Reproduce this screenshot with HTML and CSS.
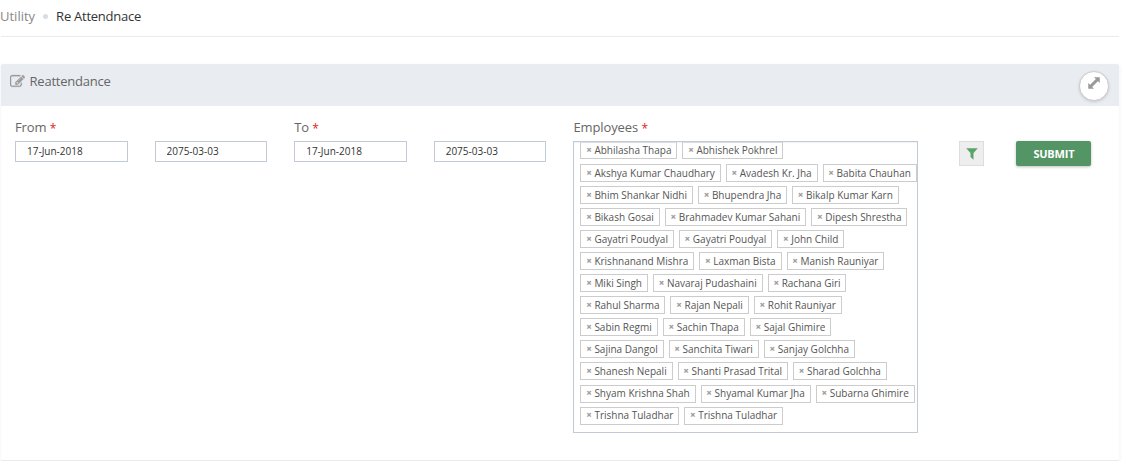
FILE: index.html
```html
<!DOCTYPE html>
<html lang="en">
<head>
<meta charset="utf-8">
<title>Re Attendance</title>
<link rel="stylesheet" href="styles.css">
</head>
<body>
<nav class="breadcrumb"><span class="crumb">Utility</span><i class="dot"></i><span class="current">Re Attendnace</span></nav>
<section class="card">
  <header class="card-head">
    <svg class="edit" viewBox="0 0 1792 1792"><path d="M888 1184l116-116-152-152-116 116v56h96v96h56zm440-720q-16-16-33 1l-350 350q-17 17-1 33t33-1l350-350q17-17 1-33zm80 594v190q0 119-84.500 203.500t-203.500 84.500h-832q-119 0-203.500-84.500t-84.500-203.500v-832q0-119 84.500-203.500t203.500-84.500h832q63 0 117 25 15 7 18 23 3 17-9 29l-49 49q-14 14-32 8-23-6-45-6h-832q-66 0-113 47t-47 113v832q0 66 47 113t113 47h832q66 0 113-47t47-113v-126q0-13 9-22l64-64q15-15 35-7t20 29zm-96-738l288 288-672 672h-288v-288zm444 132l-92 92-288-288 92-92q28-28 68-28t68 28l152 152q28 28 28 68t-28 68z"/></svg>
    <h1 class="title">Reattendance</h1>
    <button class="expand"><svg viewBox="0 0 12 12"><path d="M6.500 .500h5v5L9.900 3.900 3.900 9.900 5.500 11.500h-5v-5L2.100 8.100 8.100 2.100z"/></svg></button>
  </header>
  <div class="card-body">
    <div class="group">
      <label class="label">From <b>*</b></label>
      <div class="dates"><input class="date" value="17-Jun-2018"><input class="date" value="2075-03-03"></div>
    </div>
    <div class="group">
      <label class="label">To <b>*</b></label>
      <div class="dates"><input class="date" value="17-Jun-2018"><input class="date" value="2075-03-03"></div>
    </div>
    <div class="employees">
      <label class="label">Employees <b>*</b></label>
      <div class="picker">
        <div class="row"><span class="tag"><i>×</i>Abhilasha Thapa</span><span class="tag"><i>×</i>Abhishek Pokhrel</span></div>
        <div class="row"><span class="tag"><i>×</i>Akshya Kumar Chaudhary</span><span class="tag"><i>×</i>Avadesh Kr. Jha</span><span class="tag"><i>×</i>Babita Chauhan</span></div>
        <div class="row"><span class="tag"><i>×</i>Bhim Shankar Nidhi</span><span class="tag"><i>×</i>Bhupendra Jha</span><span class="tag"><i>×</i>Bikalp Kumar Karn</span></div>
        <div class="row"><span class="tag"><i>×</i>Bikash Gosai</span><span class="tag"><i>×</i>Brahmadev Kumar Sahani</span><span class="tag"><i>×</i>Dipesh Shrestha</span></div>
        <div class="row"><span class="tag"><i>×</i>Gayatri Poudyal</span><span class="tag"><i>×</i>Gayatri Poudyal</span><span class="tag"><i>×</i>John Child</span></div>
        <div class="row"><span class="tag"><i>×</i>Krishnanand Mishra</span><span class="tag"><i>×</i>Laxman Bista</span><span class="tag"><i>×</i>Manish Rauniyar</span></div>
        <div class="row"><span class="tag"><i>×</i>Miki Singh</span><span class="tag"><i>×</i>Navaraj Pudashaini</span><span class="tag"><i>×</i>Rachana Giri</span></div>
        <div class="row"><span class="tag"><i>×</i>Rahul Sharma</span><span class="tag"><i>×</i>Rajan Nepali</span><span class="tag"><i>×</i>Rohit Rauniyar</span></div>
        <div class="row"><span class="tag"><i>×</i>Sabin Regmi</span><span class="tag"><i>×</i>Sachin Thapa</span><span class="tag"><i>×</i>Sajal Ghimire</span></div>
        <div class="row"><span class="tag"><i>×</i>Sajina Dangol</span><span class="tag"><i>×</i>Sanchita Tiwari</span><span class="tag"><i>×</i>Sanjay Golchha</span></div>
        <div class="row"><span class="tag"><i>×</i>Shanesh Nepali</span><span class="tag"><i>×</i>Shanti Prasad Trital</span><span class="tag"><i>×</i>Sharad Golchha</span></div>
        <div class="row"><span class="tag"><i>×</i>Shyam Krishna Shah</span><span class="tag"><i>×</i>Shyamal Kumar Jha</span><span class="tag"><i>×</i>Subarna Ghimire</span></div>
        <div class="row"><span class="tag"><i>×</i>Trishna Tuladhar</span><span class="tag"><i>×</i>Trishna Tuladhar</span></div>
      </div>
    </div>
    <button class="filter"><svg viewBox="0 0 12 12"><path d="M.2.300h11.600L7.500 5v6.700L4.500 9V5z"/></svg></button>
    <button class="submit">SUBMIT</button>
  </div>
</section>
</body>
</html>
```

FILE: styles.css
```css
* { box-sizing: border-box; }
body { margin: 0; background: #fff; font-family: "Open Sans", sans-serif; font-size: 13px; color: #666; overflow: hidden; }
button { padding: 0; font-family: inherit; }
.breadcrumb { display: flex; align-items: center; width: 1118px; height: 37px; margin-left: 1px; padding-bottom: 4px; border-bottom: 1px solid #e7ecf1; font-size: 13px; }
.crumb { color: #888; margin-left: -1px; }
.dot { width: 5px; height: 5px; margin: 0 8px 0 8px; border-radius: 50%; background: #d9dde1; }
.current { color: #333; letter-spacing: -.25px; }
.card { width: 1118px; height: 397px; margin: 27px 0 0 1px; border-bottom: 1px solid #e7ebf1; border-radius: 2px; box-shadow: 0 2px 3px 2px rgba(0,0,0,.03); }
.card-head { display: flex; height: 42px; padding: 0 10px 0 9px; background: #e9ecf1; border-radius: 2px 2px 0 0; align-items: flex-start; }
.edit { width: 15px; height: 15px; margin-top: 10px; fill: #999; stroke: #999; stroke-width: 30px; }
.title { margin: 8px 0 0 4.500px; font-size: 13px; line-height: 18px; font-weight: 400; letter-spacing: -.22px; color: #666; }
.expand { display: flex; justify-content: center; width: 30px; height: 30px; margin: 7px 0 0 auto; padding-top: 5px; border: 1px solid #ccc; border-radius: 50%; background: #fff; box-shadow: 0 1px 3px rgba(0,0,0,.16); }
.expand svg { width: 12px; height: 12px; fill: #999; stroke: #999; stroke-width: .5px; }
.card-body { display: flex; align-items: flex-start; padding: 12px 0 0 14px; }
.group { width: 279.200px; }
.label { display: block; height: 23px; line-height: 18px; font-size: 13px; letter-spacing: -.1px; white-space: pre; }
.label b { color: #e02222; font-weight: 400; font-size: 12px; line-height: 1; vertical-align: -1px; }
.dates { display: flex; gap: 27px; }
.date { width: 112.500px; height: 21px; padding: 0 11px 1px; border: 1px solid #c2cad8; border-radius: 0; color: #333; font: 10px "Open Sans", sans-serif; }
.employees { width: 345px; }
.picker { height: 292px; padding: 0 0 0 6px; border: 1px solid #c2cad8; box-shadow: inset 0 1px 1px rgba(0,0,0,.06); }
.row { display: flex; gap: 5px; height: 22.060px; white-space: nowrap; }
.tag { display: flex; align-items: center; flex: none; height: 18px; padding: 0 4.900px 1px 5px; border: 1px solid #ccc; color: #555; font-size: 10px; line-height: 16px; }
.row:first-child .tag { height: 17px; border-top-color: #ddd; }
.tag i { width: 8px; font-style: normal; font-weight: 700; color: #999; font-size: 9px; -webkit-text-stroke: .2px #999; }
.filter { display: flex; align-items: center; justify-content: center; width: 25px; height: 25px; margin: 23px 0 0 41px; border: 1px solid #ddd; background: #eee; }
.filter svg { width: 12px; height: 12px; fill: #5aa468; }
.submit { width: 75px; height: 25px; margin: 23px 0 0 32px; border: 0; border-radius: 2px; background: #539564; color: #fff; font-size: 11px; font-weight: 700; letter-spacing: -.2px; box-shadow: 0 1px 3px rgba(0,0,0,.25); }
```
